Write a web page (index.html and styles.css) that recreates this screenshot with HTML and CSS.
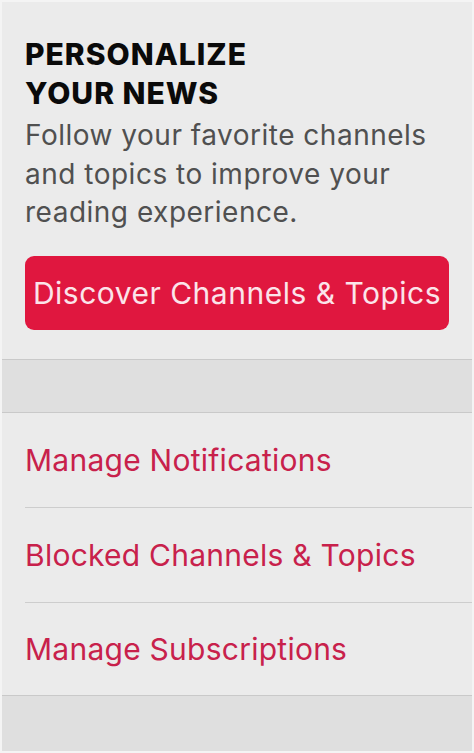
FILE: index.html
```html
<!DOCTYPE html>
<html lang="en">
<head>
    <meta charset="UTF-8">
    <meta name="viewport" content="width=device-width, initial-scale=1.0">
    <title>Personalize Your News</title>
    <link rel="stylesheet" href="styles.css">
</head>
<body>
    <div class="screen">
        <div class="intro">
            <h1 class="title">PERSONALIZE<br>YOUR NEWS</h1>
            <p class="subtitle">Follow your favorite channels and topics to improve your reading experience.</p>
            <button class="discover">Discover Channels &amp; Topics</button>
        </div>
        <div class="band"></div>
        <ul class="menu">
            <li class="menu-item">Manage Notifications</li>
            <li class="menu-item">Blocked Channels &amp; Topics</li>
            <li class="menu-item">Manage Subscriptions</li>
        </ul>
        <div class="band bottom"></div>
    </div>
</body>
</html>
```

FILE: styles.css
```css
html, body {
    margin: 0;
    padding: 0;
}
body {
    font-family: Inter, "Noto Sans", sans-serif;
    background: #f4f4f4;
}
.screen {
    box-sizing: border-box;
    width: 474px;
    height: 753px;
    border: 2px solid #f4f4f4;
    background: #ebebeb;
    display: flex;
    flex-direction: column;
}
.intro {
    padding: 33px 23px 29px 23px;
    border-bottom: 1px solid #c9c9c9;
}
.title {
    margin: 0;
    font-size: 30px;
    line-height: 39px;
    font-weight: 800;
    color: #0a0a0a;
    letter-spacing: 1px;
}
.subtitle {
    margin: 3px 0 0 0;
    font-size: 28px;
    line-height: 38.5px;
    letter-spacing: 0.5px;
    color: #505050;
}
.discover {
    display: block;
    width: 100%;
    height: 74px;
    margin-top: 24px;
    border: none;
    border-radius: 9px;
    background: #e0173f;
    color: #fbe4ea;
    font-family: Inter, "Noto Sans", sans-serif;
    font-size: 30px;
    letter-spacing: 0.5px;
    padding: 0;
}
.band {
    height: 52px;
    background: #dfdfdf;
    border-bottom: 1px solid #c9c9c9;
}
.band.bottom {
    flex: 1;
    border-bottom: none;
}
.menu {
    list-style: none;
    margin: 0;
    padding: 0 0 0 23px;
    border-bottom: 1px solid #c9c9c9;
}
.menu-item {
    height: 94px;
    display: flex;
    align-items: center;
    font-size: 30px;
    letter-spacing: 0.25px;
    color: #c8214b;
    border-bottom: 1px solid #cdcdcd;
}
.menu-item:last-child {
    border-bottom: none;
    height: 92px;
}
```
